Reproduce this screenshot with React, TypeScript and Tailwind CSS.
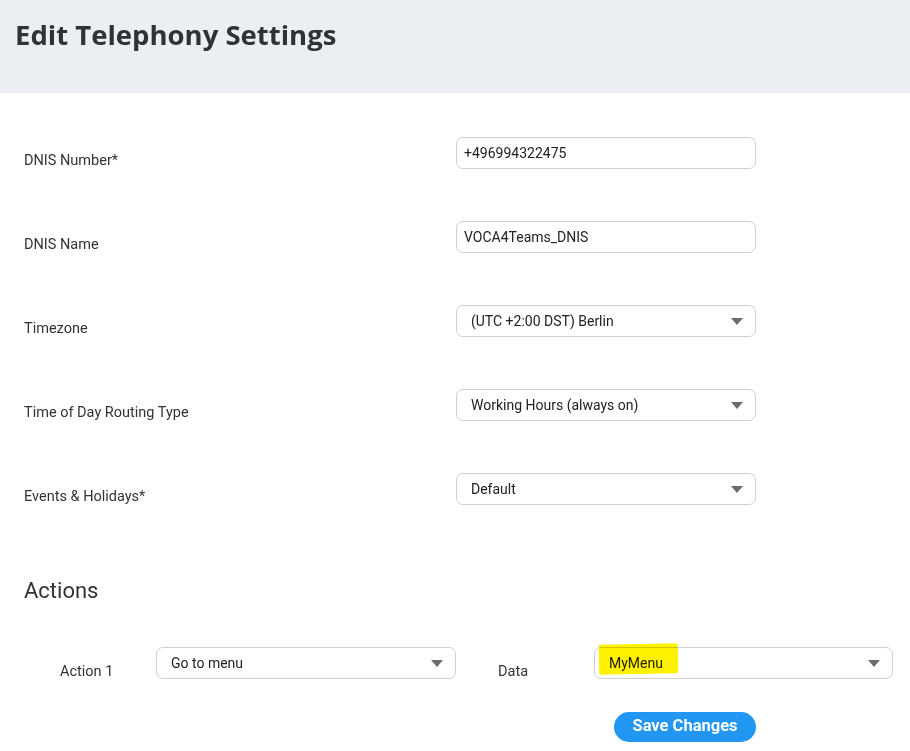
const FONT = { fontFamily: "Roboto, 'Liberation Sans', sans-serif" };

function Caret() {
  return (
    <svg width="12" height="7" viewBox="0 0 12 7" className="shrink-0">
      <path d="M0 0h12L6 7z" fill="#6b6b6b" />
    </svg>
  );
}

function TextBox({ value }: { value: string }) {
  return (
    <div className="flex h-[32px] w-[300px] items-center rounded-[7px] border border-[#cfcfcf] bg-white pl-[7px] text-[14px] text-[#222]">
      {value}
    </div>
  );
}

function SelectBox({ value, width = "w-[300px]" }: { value: string; width?: string }) {
  return (
    <div className={`flex h-[32px] ${width} items-center justify-between rounded-[7px] border border-[#cfcfcf] bg-white pl-[14px] pr-[12px] text-[14px] text-[#222]`}>
      <span>{value}</span>
      <Caret />
    </div>
  );
}

function Row({ label, children }: { label: string; children: React.ReactNode }) {
  return (
    <div className="flex h-[84px] items-center">
      <div className="mt-[15px] w-[432px] text-[14.5px] text-[#333]">{label}</div>
      {children}
    </div>
  );
}

export default function App() {
  return (
    <div className="min-h-[751px] w-[910px] bg-white" style={FONT}>
      <header className="flex h-[93px] items-start bg-[#ebeef2] pl-[15px] pt-[15px]">
        <h1 className="text-[27.5px] font-bold leading-[40px] text-[#2f3337]" style={{ fontFamily: "'Open Sans', Lato, sans-serif" }}>
          Edit Telephony Settings
        </h1>
      </header>

      <section className="pl-[24px] pt-[18px]">
        <Row label="DNIS Number*">
          <TextBox value="+496994322475" />
        </Row>
        <Row label="DNIS Name">
          <TextBox value="VOCA4Teams_DNIS" />
        </Row>
        <Row label="Timezone">
          <SelectBox value="(UTC +2:00 DST) Berlin" />
        </Row>
        <Row label="Time of Day Routing Type">
          <SelectBox value="Working Hours (always on)" />
        </Row>
        <Row label="Events & Holidays*">
          <SelectBox value="Default" />
        </Row>

        <h2 className="mt-[45px] text-[22px] leading-[30px] text-[#333]">Actions</h2>

        <div className="mt-[41px] flex items-start">
          <div className="ml-[36px] mt-[14px] w-[96px] text-[14.5px] text-[#333]">Action 1</div>
          <SelectBox value="Go to menu" />
          <div className="ml-[42px] mt-[14px] w-[96px] text-[14.5px] text-[#333]">Data</div>
          <div className="relative">
            <SelectBox value="MyMenu" width="w-[299px]" />
            <div className="pointer-events-none absolute left-[5px] top-[-3px] h-[30px] w-[79px] -rotate-[1deg] rounded-[2px] bg-[#fff200] mix-blend-multiply" />
          </div>
        </div>

        <div className="mt-[29px] pl-[590px]">
          <button className="h-[30px] w-[142px] rounded-full bg-[#2196f3] text-[16.5px] font-bold text-white">
            Save Changes
          </button>
        </div>
      </section>
    </div>
  );
}
